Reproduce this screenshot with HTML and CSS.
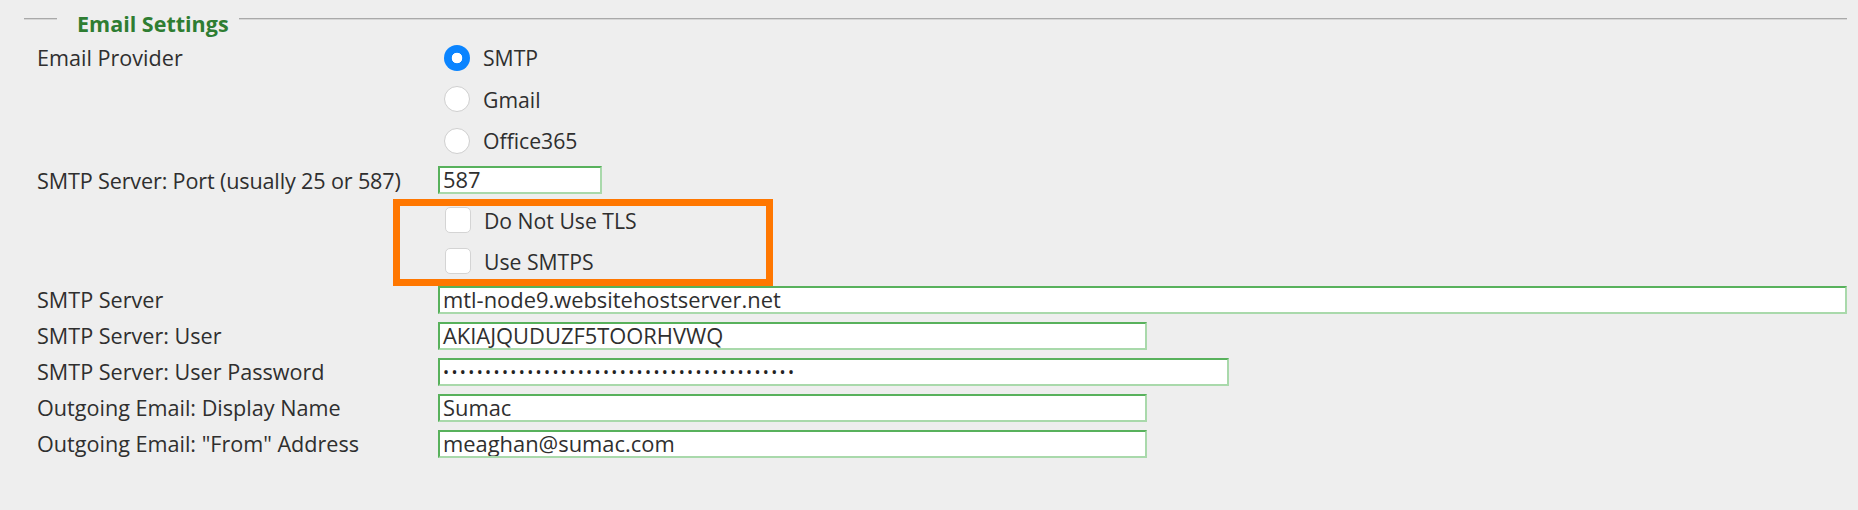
FILE: index.html
```html
<!DOCTYPE html>
<html lang="en">
<head>
<meta charset="utf-8">
<title>Email Settings</title>
<link rel="stylesheet" href="styles.css">
</head>
<body>
<div class="panel">
  <div class="legend-row">
    <span class="rule short"></span>
    <span class="legend">Email Settings</span>
    <span class="rule long"></span>
  </div>
  <div class="form">
    <div class="label label-top">Email Provider</div>
    <div class="options radios">
      <div class="option"><span class="radio checked"></span><span class="opt-text">SMTP</span></div>
      <div class="option"><span class="radio"></span><span class="opt-text">Gmail</span></div>
      <div class="option"><span class="radio"></span><span class="opt-text">Office365</span></div>
    </div>

    <div class="label port-label">SMTP Server: Port (usually 25 or 587)</div>
    <div class="ctrl port-row"><div class="field w-port">587</div></div>

    <div class="label"></div>
    <div class="options checks">
      <div class="option"><span class="checkbox"></span><span class="opt-text">Do Not Use TLS</span></div>
      <div class="option"><span class="checkbox"></span><span class="opt-text">Use SMTPS</span></div>
      <div class="highlight"></div>
    </div>

    <div class="label row">SMTP Server</div>
    <div class="ctrl row"><div class="field w-full">mtl-node9.websitehostserver.net</div></div>

    <div class="label row">SMTP Server: User</div>
    <div class="ctrl row"><div class="field w-md">AKIAJQUDUZF5TOORHVWQ</div></div>

    <div class="label row">SMTP Server: User Password</div>
    <div class="ctrl row"><div class="field w-pw"><span class="dots">••••••••••••••••••••••••••••••••••••••••••</span></div></div>

    <div class="label row">Outgoing Email: Display Name</div>
    <div class="ctrl row"><div class="field w-md">Sumac</div></div>

    <div class="label row">Outgoing Email: "From" Address</div>
    <div class="ctrl row"><div class="field w-md">meaghan@sumac.com</div></div>
  </div>
</div>
</body>
</html>
```
FILE: styles.css
```css
html, body {
  margin: 0;
  padding: 0;
  background: #eeeeee;
}

body {
  font-family: "Open Sans", "Noto Sans", sans-serif;
  color: #2f2f2f;
}

.panel {
  padding: 11px 11px 0 24px;
}

.legend-row {
  display: flex;
  align-items: flex-start;
  height: 26px;
}

.rule {
  display: block;
  height: 0;
  margin-top: 7px;
  border-top: 1px solid #a9a9a9;
  border-bottom: 1px solid #d6d6d6;
}

.rule.short {
  width: 33px;
}

.rule.long {
  flex: 1;
}

.legend {
  padding: 0 10px 0 20px;
  font-weight: 700;
  font-size: 21.5px;
  line-height: 26px;
  color: #2e7d32;
  white-space: nowrap;
}

.form {
  display: grid;
  grid-template-columns: 401px 1fr;
  padding-left: 13px;
}

.label {
  font-size: 21.6px;
  color: #2f2f2f;
  white-space: nowrap;
  display: flex;
  align-items: center;
}

.label-top {
  align-items: flex-start;
  line-height: 41.5px;
  height: 41.5px;
}

.options {
  display: flex;
  flex-direction: column;
}

.radios .option {
  height: 41.5px;
}

.checks {
  position: relative;
}

.checks .option {
  height: 41px;
}

.option {
  display: flex;
  align-items: center;
  gap: 13px;
  font-size: 21.2px;
  color: #2f2f2f;
}

.radio {
  box-sizing: border-box;
  width: 26px;
  height: 26px;
  margin-left: 6px;
  border-radius: 50%;
  border: 1px solid #cfcfcf;
  background: #ffffff;
}

.radio.checked {
  border: none;
  background: radial-gradient(circle, #ffffff 0 5px, #0a84ff 5.6px);
}

.checkbox {
  box-sizing: border-box;
  width: 26px;
  height: 26px;
  margin-left: 7px;
  border-radius: 5px;
  border: 1px solid #d4d4d4;
  background: #ffffff;
}

.port-label {
  height: 38px;
  letter-spacing: -0.15px;
}

.port-row {
  height: 38px;
  padding-top: 4px;
  box-sizing: border-box;
}

.row {
  height: 36px;
}

.ctrl.row {
  display: flex;
  align-items: center;
}

.field {
  box-sizing: border-box;
  height: 28px;
  padding: 0 3px;
  border: 2px solid;
  border-color: #58b15c #a9d9ab #a9d9ab #58b15c;
  background: #ffffff;
  font-size: 21.9px;
  line-height: 24px;
  color: #2f2f2f;
  white-space: nowrap;
  overflow: hidden;
}

.w-port { width: 164px; }
.w-full { width: 100%; }
.w-md { width: 709px; }
.w-pw { width: 791px; }

.dots {
  font-size: 16px;
  letter-spacing: 2.4px;
  vertical-align: top;
  line-height: 24px;
  color: #222222;
}

.highlight {
  position: absolute;
  left: -45px;
  top: -1px;
  width: 380px;
  height: 87px;
  box-sizing: border-box;
  border: 7px solid #ff7700;
  pointer-events: none;
}
```
